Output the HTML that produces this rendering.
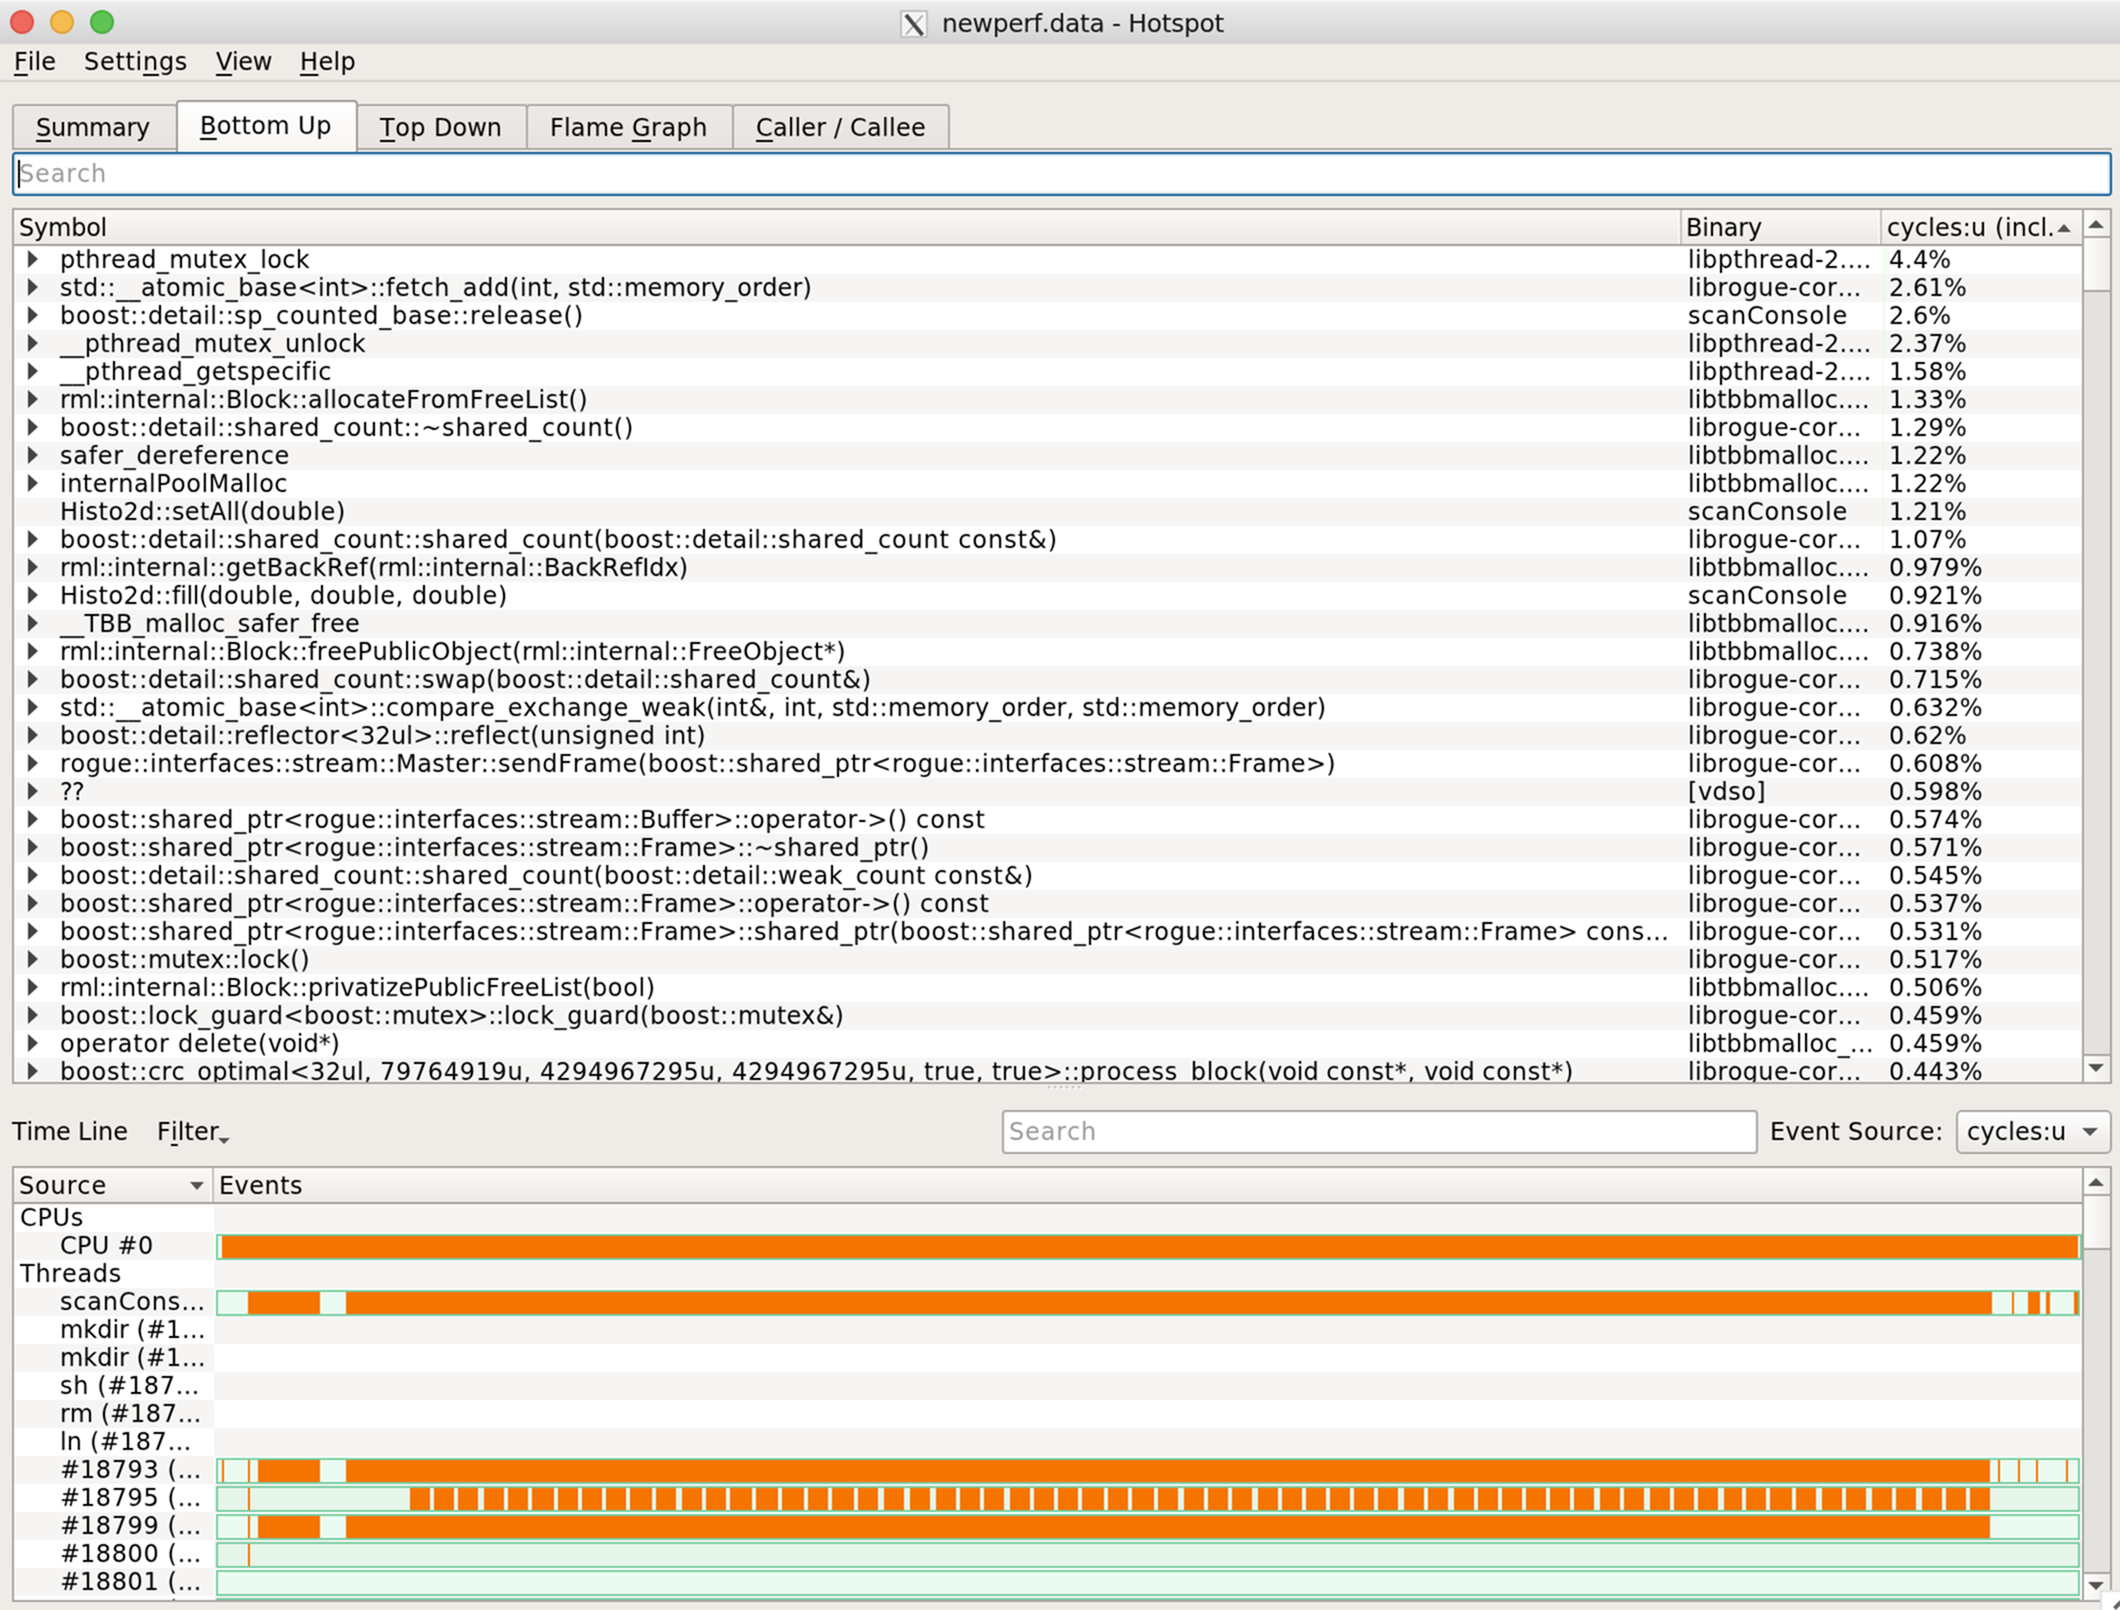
<!DOCTYPE html><html><head><meta charset="utf-8"><title>newperf.data - Hotspot</title><style>
*{box-sizing:border-box;margin:0;padding:0}
html{width:2120px;height:1610px;overflow:hidden;background:#efebe7}
body{position:relative;width:2120px;height:1610px;overflow:hidden;background:#efebe7}
#clip{position:absolute;left:0;top:0;width:2120px;height:1610px;overflow:hidden;overflow:clip}
#fx{position:absolute;left:-10px;top:-10px;width:2140px;height:1630px;overflow:hidden;background:#efebe7;filter:url(#bl)}
#root{position:absolute;left:10px;top:10px;width:2120px;height:1610px;font-family:"DejaVu Sans","Liberation Sans",sans-serif;font-size:24px;line-height:28px;color:#000;font-kerning:none;font-variant-ligatures:none;-webkit-font-smoothing:antialiased}
.a{position:absolute}
.t{position:absolute;white-space:nowrap;height:28px;line-height:28px;margin-top:1px}
u{text-decoration:underline;text-decoration-thickness:2px;text-underline-offset:4px;text-decoration-skip-ink:none}
#title{left:-10px;top:-10px;width:2140px;height:54px;background:linear-gradient(#ebebeb,#d3d3d3);border-top:12px solid #f4f4f4}
.tl{position:absolute;top:10px;width:24px;height:24px;border-radius:50%;border:2px solid}
#menuline{left:-10px;top:80px;width:2140px;height:2px;background:#d3cfcb}
.tab{position:absolute;top:104px;height:46px;border:2px solid #adaaa6;border-radius:4px 4px 0 0;background:linear-gradient(#ece9e6,#e6e3e0)}
.tab.sel{top:100px;height:52px;background:linear-gradient(#ffffff,#f8f5f2);border-color:#9f9b97;border-bottom:none;z-index:2}
#paneline{left:12px;top:148px;width:2100px;height:2px;background:#aeaaa4}
#search1{left:12px;top:152px;width:2100px;height:44px;border:2px solid #12609a;border-radius:4px;background:#fff;box-shadow:inset 0 0 0 2px #d3e0ea}
.frame{position:absolute;border:2px solid #a9a5a1;background:#fff;overflow:hidden}
.hdr{position:absolute;left:0;top:0;height:34px;background:linear-gradient(#fbf8f5,#ece9e6);}
.hline{position:absolute;left:0;height:2px;background:#a29e9a}
.vdiv{position:absolute;width:2px;background:#c6c3c0;box-shadow:-2px 0 0 #fbfaf8}
.row{position:absolute;left:0;height:28px}
.alt{background:#f7f5f3}
.arr{position:absolute;width:0;height:0;border-style:solid}
.sb{position:absolute;width:28px;background:#e4e2df;border-left:2px solid #a9a5a1}
.sbb{position:absolute;left:0;width:26px;background:linear-gradient(90deg,#fdfdfc,#eeece9)}
.sbl{position:absolute;left:0;width:26px;height:2px;background:#a9a5a1}
.ph{color:#9a9a9a}
.bar{position:absolute;height:26px;border:2px solid #7acea2}
.o{position:absolute;top:0;height:22px;background:#f67400}
</style></head><body><svg width="0" height="0" style="position:absolute"><filter id="bl" x="0" y="0" width="100%" height="100%" color-interpolation-filters="sRGB"><feConvolveMatrix order="5" kernelMatrix="0.00489 -0.01912 -0.04150 -0.01912 0.00489 -0.01912 0.07470 0.16215 0.07470 -0.01912 -0.04150 0.16215 0.35199 0.16215 -0.04150 -0.01912 0.07470 0.16215 0.07470 -0.01912 0.00489 -0.01912 -0.04150 -0.01912 0.00489" divisor="1" edgeMode="duplicate" preserveAlpha="true"/></filter></svg><div id="clip"><div id="fx"><div id="root">
<div id="title" class="a"></div>
<div class="tl" style="left:10px;background:#ee6a5e;border-color:#dc5148"></div>
<div class="tl" style="left:50px;background:#f5bd4f;border-color:#dfa337"></div>
<div class="tl" style="left:90px;background:#5fc454;border-color:#4aae40"></div>
<svg class="a" style="left:900px;top:10px" width="28" height="28" viewBox="0 0 28 28"><rect x="1" y="1" width="26" height="26" fill="#f4f4f4" stroke="#c2c2c2" stroke-width="2"/><line x1="22.5" y1="5.5" x2="6" y2="24.5" stroke="#a0a0a0" stroke-width="1.6"/><line x1="6" y1="5" x2="22.5" y2="25" stroke="#4a4a4a" stroke-width="4"/></svg>
<div class="t" id="wtitle" style="left:942px;top:9px;font-family:'DejaVu Sans','Liberation Sans',sans-serif;font-size:25px;color:#111;letter-spacing:-0.32px">newperf.data - Hotspot</div>
<div class="t menu" style="left:14px;top:47px"><span style="letter-spacing:0.02px"><u>F</u>ile</span></div>
<div class="t menu" style="left:84px;top:47px"><span style="letter-spacing:0.70px">Setti<u>n</u>gs</span></div>
<div class="t menu" style="left:216px;top:47px"><span style="letter-spacing:-0.37px"><u>V</u>iew</span></div>
<div class="t menu" style="left:300px;top:47px"><span style="letter-spacing:0.32px"><u>H</u>elp</span></div>
<div id="menuline" class="a"></div>
<div id="paneline" class="a"></div>
<div class="tab" style="left:12px;width:166px"></div>
<div class="t tabt" style="left:36px;top:113px;z-index:3"><span style="letter-spacing:-0.28px"><u>S</u>ummary</span></div>
<div class="tab sel" style="left:176px;width:182px"></div>
<div class="t tabt" style="left:200px;top:111px;z-index:3"><span style="letter-spacing:0.33px"><u>B</u>ottom </span><span style="letter-spacing:0.60px">Up</span></div>
<div class="tab" style="left:356px;width:172px"></div>
<div class="t tabt" style="left:380px;top:113px;z-index:3"><span style="letter-spacing:0.45px"><u>T</u>op </span><span style="letter-spacing:-0.00px">Down</span></div>
<div class="tab" style="left:526px;width:208px"></div>
<div class="t tabt" style="left:550px;top:113px;z-index:3"><span style="letter-spacing:0.17px">Flame </span><span style="letter-spacing:0.48px"><u>G</u>raph</span></div>
<div class="tab" style="left:732px;width:218px"></div>
<div class="t tabt" style="left:756px;top:113px;z-index:3"><span style="letter-spacing:0.14px"><u>C</u>aller / </span><span style="letter-spacing:0.28px">Callee</span></div>
<div id="search1" class="a"></div>
<div class="a" style="left:18px;top:160px;width:2px;height:28px;background:#000"></div>
<div class="t ph" style="left:19px;top:159px"><span style="letter-spacing:0.84px">Search</span></div>
<div class="frame" id="f1" style="left:12px;top:208px;width:2100px;height:876px">
<div class="hdr" style="width:2068px"></div>
<div class="hline" style="top:34px;width:2068px"></div>
<div class="vdiv" style="left:1666px;top:0;height:34px"></div>
<div class="vdiv" style="left:1866px;top:0;height:34px"></div>
<div class="t" style="left:5px;top:3px"><span style="letter-spacing:-0.23px">Symbol</span></div>
<div class="t" style="left:1672px;top:3px"><span style="letter-spacing:-0.19px">Binary</span></div>
<div class="t" style="left:1873px;top:3px"><span style="letter-spacing:0.20px">cycles:</span><span style="letter-spacing:0.60px">u (</span><span style="letter-spacing:0.13px">incl.</span></div>
<div class="arr" style="left:2043px;top:14px;border-width:0 7px 8px 7px;border-color:transparent transparent #555 transparent"></div>
<div class="row" style="top:36px;width:2068px"></div>
<div class="a" style="left:1868px;top:36px;width:8px;height:28px;background:#f3fbf3"></div>
<div class="arr" style="left:14px;top:40px;border-width:9px 0 9px 10px;border-color:transparent transparent transparent #444"></div>
<div class="t s" style="left:46px;top:35px"><span style="letter-spacing:0.34px">pthread_mutex_lock</span></div>
<div class="t b" style="left:1674px;top:35px"><span style="letter-spacing:0.39px">libpthread-</span><span style="letter-spacing:0.37px">2.…</span></div>
<div class="t p" style="left:1875px;top:35px"><span style="letter-spacing:0.55px">4.</span><span style="letter-spacing:-0.04px">4%</span></div>
<div class="row alt" style="top:64px;width:2068px"></div>
<div class="a" style="left:1868px;top:64px;width:4px;height:28px;background:#eef6ec"></div>
<div class="arr" style="left:14px;top:68px;border-width:9px 0 9px 10px;border-color:transparent transparent transparent #444"></div>
<div class="t s" style="left:46px;top:63px"><span style="letter-spacing:0.54px">std::</span><span style="letter-spacing:0.47px">__atomic_base&lt;</span><span style="letter-spacing:0.07px">int&gt;::</span><span style="letter-spacing:0.64px">fetch_add(</span><span style="letter-spacing:0.29px">int, </span><span style="letter-spacing:0.54px">std::</span><span style="letter-spacing:0.15px">memory_order)</span></div>
<div class="t b" style="left:1674px;top:63px"><span style="letter-spacing:0.33px">librogue-</span><span style="letter-spacing:0.56px">cor…</span></div>
<div class="t p" style="left:1875px;top:63px"><span style="letter-spacing:0.55px">2.</span><span style="letter-spacing:0.22px">61%</span></div>
<div class="row" style="top:92px;width:2068px"></div>
<div class="a" style="left:1868px;top:92px;width:4px;height:28px;background:#f3fbf3"></div>
<div class="arr" style="left:14px;top:96px;border-width:9px 0 9px 10px;border-color:transparent transparent transparent #444"></div>
<div class="t s" style="left:46px;top:91px"><span style="letter-spacing:0.76px">boost::</span><span style="letter-spacing:0.30px">detail::</span><span style="letter-spacing:0.77px">sp_counted_base::</span><span style="letter-spacing:0.80px">release()</span></div>
<div class="t b" style="left:1674px;top:91px"><span style="letter-spacing:0.83px">scanConsole</span></div>
<div class="t p" style="left:1875px;top:91px"><span style="letter-spacing:0.55px">2.</span><span style="letter-spacing:-0.04px">6%</span></div>
<div class="row alt" style="top:120px;width:2068px"></div>
<div class="a" style="left:1868px;top:120px;width:4px;height:28px;background:#eef6ec"></div>
<div class="arr" style="left:14px;top:124px;border-width:9px 0 9px 10px;border-color:transparent transparent transparent #444"></div>
<div class="t s" style="left:46px;top:119px"><span style="letter-spacing:0.35px">__pthread_mutex_unlock</span></div>
<div class="t b" style="left:1674px;top:119px"><span style="letter-spacing:0.39px">libpthread-</span><span style="letter-spacing:0.37px">2.…</span></div>
<div class="t p" style="left:1875px;top:119px"><span style="letter-spacing:0.55px">2.</span><span style="letter-spacing:0.22px">37%</span></div>
<div class="row" style="top:148px;width:2068px"></div>
<div class="a" style="left:1868px;top:148px;width:2px;height:28px;background:#f3fbf3"></div>
<div class="arr" style="left:14px;top:152px;border-width:9px 0 9px 10px;border-color:transparent transparent transparent #444"></div>
<div class="t s" style="left:46px;top:147px"><span style="letter-spacing:0.55px">__pthread_getspecific</span></div>
<div class="t b" style="left:1674px;top:147px"><span style="letter-spacing:0.39px">libpthread-</span><span style="letter-spacing:0.37px">2.…</span></div>
<div class="t p" style="left:1875px;top:147px"><span style="letter-spacing:0.55px">1.</span><span style="letter-spacing:0.22px">58%</span></div>
<div class="row alt" style="top:176px;width:2068px"></div>
<div class="a" style="left:1868px;top:176px;width:2px;height:28px;background:#eef6ec"></div>
<div class="arr" style="left:14px;top:180px;border-width:9px 0 9px 10px;border-color:transparent transparent transparent #444"></div>
<div class="t s" style="left:46px;top:175px"><span style="letter-spacing:-0.42px">rml::</span><span style="letter-spacing:0.33px">internal::</span><span style="letter-spacing:0.13px">Block::</span><span style="letter-spacing:0.44px">allocateFromFreeList()</span></div>
<div class="t b" style="left:1674px;top:175px"><span style="letter-spacing:0.19px">libtbbmalloc.…</span></div>
<div class="t p" style="left:1875px;top:175px"><span style="letter-spacing:0.55px">1.</span><span style="letter-spacing:0.22px">33%</span></div>
<div class="row" style="top:204px;width:2068px"></div>
<div class="a" style="left:1868px;top:204px;width:2px;height:28px;background:#f3fbf3"></div>
<div class="arr" style="left:14px;top:208px;border-width:9px 0 9px 10px;border-color:transparent transparent transparent #444"></div>
<div class="t s" style="left:46px;top:203px"><span style="letter-spacing:0.76px">boost::</span><span style="letter-spacing:0.30px">detail::</span><span style="letter-spacing:0.65px">shared_count::~</span><span style="letter-spacing:0.81px">shared_count()</span></div>
<div class="t b" style="left:1674px;top:203px"><span style="letter-spacing:0.33px">librogue-</span><span style="letter-spacing:0.56px">cor…</span></div>
<div class="t p" style="left:1875px;top:203px"><span style="letter-spacing:0.55px">1.</span><span style="letter-spacing:0.22px">29%</span></div>
<div class="row alt" style="top:232px;width:2068px"></div>
<div class="a" style="left:1868px;top:232px;width:2px;height:28px;background:#eef6ec"></div>
<div class="arr" style="left:14px;top:236px;border-width:9px 0 9px 10px;border-color:transparent transparent transparent #444"></div>
<div class="t s" style="left:46px;top:231px"><span style="letter-spacing:0.71px">safer_dereference</span></div>
<div class="t b" style="left:1674px;top:231px"><span style="letter-spacing:0.19px">libtbbmalloc.…</span></div>
<div class="t p" style="left:1875px;top:231px"><span style="letter-spacing:0.55px">1.</span><span style="letter-spacing:0.22px">22%</span></div>
<div class="row" style="top:260px;width:2068px"></div>
<div class="a" style="left:1868px;top:260px;width:2px;height:28px;background:#f3fbf3"></div>
<div class="arr" style="left:14px;top:264px;border-width:9px 0 9px 10px;border-color:transparent transparent transparent #444"></div>
<div class="t s" style="left:46px;top:259px"><span style="letter-spacing:0.46px">internalPoolMalloc</span></div>
<div class="t b" style="left:1674px;top:259px"><span style="letter-spacing:0.19px">libtbbmalloc.…</span></div>
<div class="t p" style="left:1875px;top:259px"><span style="letter-spacing:0.55px">1.</span><span style="letter-spacing:0.22px">22%</span></div>
<div class="row alt" style="top:288px;width:2068px"></div>
<div class="a" style="left:1868px;top:288px;width:2px;height:28px;background:#eef6ec"></div>
<div class="t s" style="left:46px;top:287px"><span style="letter-spacing:0.45px">Histo2d::</span><span style="letter-spacing:0.31px">setAll(</span><span style="letter-spacing:0.69px">double)</span></div>
<div class="t b" style="left:1674px;top:287px"><span style="letter-spacing:0.83px">scanConsole</span></div>
<div class="t p" style="left:1875px;top:287px"><span style="letter-spacing:0.55px">1.</span><span style="letter-spacing:0.22px">21%</span></div>
<div class="row" style="top:316px;width:2068px"></div>
<div class="a" style="left:1868px;top:316px;width:2px;height:28px;background:#f3fbf3"></div>
<div class="arr" style="left:14px;top:320px;border-width:9px 0 9px 10px;border-color:transparent transparent transparent #444"></div>
<div class="t s" style="left:46px;top:315px"><span style="letter-spacing:0.76px">boost::</span><span style="letter-spacing:0.30px">detail::</span><span style="letter-spacing:0.70px">shared_count::</span><span style="letter-spacing:0.82px">shared_count(</span><span style="letter-spacing:0.76px">boost::</span><span style="letter-spacing:0.30px">detail::</span><span style="letter-spacing:0.80px">shared_count </span><span style="letter-spacing:0.99px">const&amp;)</span></div>
<div class="t b" style="left:1674px;top:315px"><span style="letter-spacing:0.33px">librogue-</span><span style="letter-spacing:0.56px">cor…</span></div>
<div class="t p" style="left:1875px;top:315px"><span style="letter-spacing:0.55px">1.</span><span style="letter-spacing:0.22px">07%</span></div>
<div class="row alt" style="top:344px;width:2068px"></div>
<div class="arr" style="left:14px;top:348px;border-width:9px 0 9px 10px;border-color:transparent transparent transparent #444"></div>
<div class="t s" style="left:46px;top:343px"><span style="letter-spacing:-0.42px">rml::</span><span style="letter-spacing:0.33px">internal::</span><span style="letter-spacing:0.46px">getBackRef(</span><span style="letter-spacing:-0.42px">rml::</span><span style="letter-spacing:0.33px">internal::</span><span style="letter-spacing:-0.00px">BackRefIdx)</span></div>
<div class="t b" style="left:1674px;top:343px"><span style="letter-spacing:0.19px">libtbbmalloc.…</span></div>
<div class="t p" style="left:1875px;top:343px"><span style="letter-spacing:0.55px">0.</span><span style="letter-spacing:0.35px">979%</span></div>
<div class="row" style="top:372px;width:2068px"></div>
<div class="arr" style="left:14px;top:376px;border-width:9px 0 9px 10px;border-color:transparent transparent transparent #444"></div>
<div class="t s" style="left:46px;top:371px"><span style="letter-spacing:0.45px">Histo2d::</span><span style="letter-spacing:-0.36px">fill(</span><span style="letter-spacing:0.62px">double, </span><span style="letter-spacing:0.62px">double, </span><span style="letter-spacing:0.69px">double)</span></div>
<div class="t b" style="left:1674px;top:371px"><span style="letter-spacing:0.83px">scanConsole</span></div>
<div class="t p" style="left:1875px;top:371px"><span style="letter-spacing:0.55px">0.</span><span style="letter-spacing:0.35px">921%</span></div>
<div class="row alt" style="top:400px;width:2068px"></div>
<div class="arr" style="left:14px;top:404px;border-width:9px 0 9px 10px;border-color:transparent transparent transparent #444"></div>
<div class="t s" style="left:46px;top:399px"><span style="letter-spacing:0.22px">__TBB_malloc_safer_free</span></div>
<div class="t b" style="left:1674px;top:399px"><span style="letter-spacing:0.19px">libtbbmalloc.…</span></div>
<div class="t p" style="left:1875px;top:399px"><span style="letter-spacing:0.55px">0.</span><span style="letter-spacing:0.35px">916%</span></div>
<div class="row" style="top:428px;width:2068px"></div>
<div class="arr" style="left:14px;top:432px;border-width:9px 0 9px 10px;border-color:transparent transparent transparent #444"></div>
<div class="t s" style="left:46px;top:427px"><span style="letter-spacing:-0.42px">rml::</span><span style="letter-spacing:0.33px">internal::</span><span style="letter-spacing:0.13px">Block::</span><span style="letter-spacing:0.42px">freePublicObject(</span><span style="letter-spacing:-0.42px">rml::</span><span style="letter-spacing:0.33px">internal::</span><span style="letter-spacing:0.44px">FreeObject*)</span></div>
<div class="t b" style="left:1674px;top:427px"><span style="letter-spacing:0.19px">libtbbmalloc.…</span></div>
<div class="t p" style="left:1875px;top:427px"><span style="letter-spacing:0.55px">0.</span><span style="letter-spacing:0.35px">738%</span></div>
<div class="row alt" style="top:456px;width:2068px"></div>
<div class="arr" style="left:14px;top:460px;border-width:9px 0 9px 10px;border-color:transparent transparent transparent #444"></div>
<div class="t s" style="left:46px;top:455px"><span style="letter-spacing:0.76px">boost::</span><span style="letter-spacing:0.30px">detail::</span><span style="letter-spacing:0.70px">shared_count::</span><span style="letter-spacing:0.51px">swap(</span><span style="letter-spacing:0.76px">boost::</span><span style="letter-spacing:0.30px">detail::</span><span style="letter-spacing:0.85px">shared_count&amp;)</span></div>
<div class="t b" style="left:1674px;top:455px"><span style="letter-spacing:0.33px">librogue-</span><span style="letter-spacing:0.56px">cor…</span></div>
<div class="t p" style="left:1875px;top:455px"><span style="letter-spacing:0.55px">0.</span><span style="letter-spacing:0.35px">715%</span></div>
<div class="row" style="top:484px;width:2068px"></div>
<div class="arr" style="left:14px;top:488px;border-width:9px 0 9px 10px;border-color:transparent transparent transparent #444"></div>
<div class="t s" style="left:46px;top:483px"><span style="letter-spacing:0.54px">std::</span><span style="letter-spacing:0.47px">__atomic_base&lt;</span><span style="letter-spacing:0.07px">int&gt;::</span><span style="letter-spacing:0.48px">compare_exchange_weak(</span><span style="letter-spacing:0.46px">int&amp;, </span><span style="letter-spacing:0.29px">int, </span><span style="letter-spacing:0.54px">std::</span><span style="letter-spacing:0.15px">memory_order, </span><span style="letter-spacing:0.54px">std::</span><span style="letter-spacing:0.15px">memory_order)</span></div>
<div class="t b" style="left:1674px;top:483px"><span style="letter-spacing:0.33px">librogue-</span><span style="letter-spacing:0.56px">cor…</span></div>
<div class="t p" style="left:1875px;top:483px"><span style="letter-spacing:0.55px">0.</span><span style="letter-spacing:0.35px">632%</span></div>
<div class="row alt" style="top:512px;width:2068px"></div>
<div class="arr" style="left:14px;top:516px;border-width:9px 0 9px 10px;border-color:transparent transparent transparent #444"></div>
<div class="t s" style="left:46px;top:511px"><span style="letter-spacing:0.76px">boost::</span><span style="letter-spacing:0.30px">detail::</span><span style="letter-spacing:0.42px">reflector&lt;</span><span style="letter-spacing:0.19px">32ul&gt;::</span><span style="letter-spacing:0.44px">reflect(</span><span style="letter-spacing:0.70px">unsigned </span><span style="letter-spacing:0.34px">int)</span></div>
<div class="t b" style="left:1674px;top:511px"><span style="letter-spacing:0.33px">librogue-</span><span style="letter-spacing:0.56px">cor…</span></div>
<div class="t p" style="left:1875px;top:511px"><span style="letter-spacing:0.55px">0.</span><span style="letter-spacing:0.22px">62%</span></div>
<div class="row" style="top:540px;width:2068px"></div>
<div class="arr" style="left:14px;top:544px;border-width:9px 0 9px 10px;border-color:transparent transparent transparent #444"></div>
<div class="t s" style="left:46px;top:539px"><span style="letter-spacing:0.58px">rogue::</span><span style="letter-spacing:0.52px">interfaces::</span><span style="letter-spacing:0.40px">stream::</span><span style="letter-spacing:0.48px">Master::</span><span style="letter-spacing:0.64px">sendFrame(</span><span style="letter-spacing:0.76px">boost::</span><span style="letter-spacing:0.64px">shared_ptr&lt;</span><span style="letter-spacing:0.58px">rogue::</span><span style="letter-spacing:0.52px">interfaces::</span><span style="letter-spacing:0.40px">stream::</span><span style="letter-spacing:0.29px">Frame&gt;)</span></div>
<div class="t b" style="left:1674px;top:539px"><span style="letter-spacing:0.33px">librogue-</span><span style="letter-spacing:0.56px">cor…</span></div>
<div class="t p" style="left:1875px;top:539px"><span style="letter-spacing:0.55px">0.</span><span style="letter-spacing:0.35px">608%</span></div>
<div class="row alt" style="top:568px;width:2068px"></div>
<div class="arr" style="left:14px;top:572px;border-width:9px 0 9px 10px;border-color:transparent transparent transparent #444"></div>
<div class="t s" style="left:46px;top:567px"><span style="letter-spacing:-0.74px">??</span></div>
<div class="t b" style="left:1674px;top:567px"><span style="letter-spacing:0.64px">[</span><span style="letter-spacing:0.40px">vdso]</span></div>
<div class="t p" style="left:1875px;top:567px"><span style="letter-spacing:0.55px">0.</span><span style="letter-spacing:0.35px">598%</span></div>
<div class="row" style="top:596px;width:2068px"></div>
<div class="arr" style="left:14px;top:600px;border-width:9px 0 9px 10px;border-color:transparent transparent transparent #444"></div>
<div class="t s" style="left:46px;top:595px"><span style="letter-spacing:0.76px">boost::</span><span style="letter-spacing:0.64px">shared_ptr&lt;</span><span style="letter-spacing:0.58px">rogue::</span><span style="letter-spacing:0.52px">interfaces::</span><span style="letter-spacing:0.40px">stream::</span><span style="letter-spacing:0.06px">Buffer&gt;::</span><span style="letter-spacing:0.59px">operator-&gt;() </span><span style="letter-spacing:1.00px">const</span></div>
<div class="t b" style="left:1674px;top:595px"><span style="letter-spacing:0.33px">librogue-</span><span style="letter-spacing:0.56px">cor…</span></div>
<div class="t p" style="left:1875px;top:595px"><span style="letter-spacing:0.55px">0.</span><span style="letter-spacing:0.35px">574%</span></div>
<div class="row alt" style="top:624px;width:2068px"></div>
<div class="arr" style="left:14px;top:628px;border-width:9px 0 9px 10px;border-color:transparent transparent transparent #444"></div>
<div class="t s" style="left:46px;top:623px"><span style="letter-spacing:0.76px">boost::</span><span style="letter-spacing:0.64px">shared_ptr&lt;</span><span style="letter-spacing:0.58px">rogue::</span><span style="letter-spacing:0.52px">interfaces::</span><span style="letter-spacing:0.40px">stream::</span><span style="letter-spacing:0.12px">Frame&gt;::~</span><span style="letter-spacing:0.71px">shared_ptr()</span></div>
<div class="t b" style="left:1674px;top:623px"><span style="letter-spacing:0.33px">librogue-</span><span style="letter-spacing:0.56px">cor…</span></div>
<div class="t p" style="left:1875px;top:623px"><span style="letter-spacing:0.55px">0.</span><span style="letter-spacing:0.35px">571%</span></div>
<div class="row" style="top:652px;width:2068px"></div>
<div class="arr" style="left:14px;top:656px;border-width:9px 0 9px 10px;border-color:transparent transparent transparent #444"></div>
<div class="t s" style="left:46px;top:651px"><span style="letter-spacing:0.76px">boost::</span><span style="letter-spacing:0.30px">detail::</span><span style="letter-spacing:0.70px">shared_count::</span><span style="letter-spacing:0.82px">shared_count(</span><span style="letter-spacing:0.76px">boost::</span><span style="letter-spacing:0.30px">detail::</span><span style="letter-spacing:0.51px">weak_count </span><span style="letter-spacing:0.99px">const&amp;)</span></div>
<div class="t b" style="left:1674px;top:651px"><span style="letter-spacing:0.33px">librogue-</span><span style="letter-spacing:0.56px">cor…</span></div>
<div class="t p" style="left:1875px;top:651px"><span style="letter-spacing:0.55px">0.</span><span style="letter-spacing:0.35px">545%</span></div>
<div class="row alt" style="top:680px;width:2068px"></div>
<div class="arr" style="left:14px;top:684px;border-width:9px 0 9px 10px;border-color:transparent transparent transparent #444"></div>
<div class="t s" style="left:46px;top:679px"><span style="letter-spacing:0.76px">boost::</span><span style="letter-spacing:0.64px">shared_ptr&lt;</span><span style="letter-spacing:0.58px">rogue::</span><span style="letter-spacing:0.52px">interfaces::</span><span style="letter-spacing:0.40px">stream::</span><span style="letter-spacing:0.15px">Frame&gt;::</span><span style="letter-spacing:0.59px">operator-&gt;() </span><span style="letter-spacing:1.00px">const</span></div>
<div class="t b" style="left:1674px;top:679px"><span style="letter-spacing:0.33px">librogue-</span><span style="letter-spacing:0.56px">cor…</span></div>
<div class="t p" style="left:1875px;top:679px"><span style="letter-spacing:0.55px">0.</span><span style="letter-spacing:0.35px">537%</span></div>
<div class="row" style="top:708px;width:2068px"></div>
<div class="arr" style="left:14px;top:712px;border-width:9px 0 9px 10px;border-color:transparent transparent transparent #444"></div>
<div class="t s" style="left:46px;top:707px"><span style="letter-spacing:0.76px">boost::</span><span style="letter-spacing:0.64px">shared_ptr&lt;</span><span style="letter-spacing:0.58px">rogue::</span><span style="letter-spacing:0.52px">interfaces::</span><span style="letter-spacing:0.40px">stream::</span><span style="letter-spacing:0.15px">Frame&gt;::</span><span style="letter-spacing:0.71px">shared_ptr(</span><span style="letter-spacing:0.76px">boost::</span><span style="letter-spacing:0.64px">shared_ptr&lt;</span><span style="letter-spacing:0.58px">rogue::</span><span style="letter-spacing:0.52px">interfaces::</span><span style="letter-spacing:0.40px">stream::</span><span style="letter-spacing:0.25px">Frame&gt; </span><span style="letter-spacing:0.88px">cons…</span></div>
<div class="t b" style="left:1674px;top:707px"><span style="letter-spacing:0.33px">librogue-</span><span style="letter-spacing:0.56px">cor…</span></div>
<div class="t p" style="left:1875px;top:707px"><span style="letter-spacing:0.55px">0.</span><span style="letter-spacing:0.35px">531%</span></div>
<div class="row alt" style="top:736px;width:2068px"></div>
<div class="arr" style="left:14px;top:740px;border-width:9px 0 9px 10px;border-color:transparent transparent transparent #444"></div>
<div class="t s" style="left:46px;top:735px"><span style="letter-spacing:0.76px">boost::</span><span style="letter-spacing:-0.16px">mutex::</span><span style="letter-spacing:0.47px">lock()</span></div>
<div class="t b" style="left:1674px;top:735px"><span style="letter-spacing:0.33px">librogue-</span><span style="letter-spacing:0.56px">cor…</span></div>
<div class="t p" style="left:1875px;top:735px"><span style="letter-spacing:0.55px">0.</span><span style="letter-spacing:0.35px">517%</span></div>
<div class="row" style="top:764px;width:2068px"></div>
<div class="arr" style="left:14px;top:768px;border-width:9px 0 9px 10px;border-color:transparent transparent transparent #444"></div>
<div class="t s" style="left:46px;top:763px"><span style="letter-spacing:-0.42px">rml::</span><span style="letter-spacing:0.33px">internal::</span><span style="letter-spacing:0.13px">Block::</span><span style="letter-spacing:0.16px">privatizePublicFreeList(</span><span style="letter-spacing:0.67px">bool)</span></div>
<div class="t b" style="left:1674px;top:763px"><span style="letter-spacing:0.19px">libtbbmalloc.…</span></div>
<div class="t p" style="left:1875px;top:763px"><span style="letter-spacing:0.55px">0.</span><span style="letter-spacing:0.35px">506%</span></div>
<div class="row alt" style="top:792px;width:2068px"></div>
<div class="arr" style="left:14px;top:796px;border-width:9px 0 9px 10px;border-color:transparent transparent transparent #444"></div>
<div class="t s" style="left:46px;top:791px"><span style="letter-spacing:0.76px">boost::</span><span style="letter-spacing:0.47px">lock_guard&lt;</span><span style="letter-spacing:0.76px">boost::</span><span style="letter-spacing:-0.16px">mutex&gt;::</span><span style="letter-spacing:0.54px">lock_guard(</span><span style="letter-spacing:0.76px">boost::</span><span style="letter-spacing:0.14px">mutex&amp;)</span></div>
<div class="t b" style="left:1674px;top:791px"><span style="letter-spacing:0.33px">librogue-</span><span style="letter-spacing:0.56px">cor…</span></div>
<div class="t p" style="left:1875px;top:791px"><span style="letter-spacing:0.55px">0.</span><span style="letter-spacing:0.35px">459%</span></div>
<div class="row" style="top:820px;width:2068px"></div>
<div class="arr" style="left:14px;top:824px;border-width:9px 0 9px 10px;border-color:transparent transparent transparent #444"></div>
<div class="t s" style="left:46px;top:819px"><span style="letter-spacing:0.79px">operator </span><span style="letter-spacing:0.72px">delete(</span><span style="letter-spacing:-0.03px">void*)</span></div>
<div class="t b" style="left:1674px;top:819px"><span style="letter-spacing:0.16px">libtbbmalloc_…</span></div>
<div class="t p" style="left:1875px;top:819px"><span style="letter-spacing:0.55px">0.</span><span style="letter-spacing:0.35px">459%</span></div>
<div class="row alt" style="top:848px;width:2068px"></div>
<div class="arr" style="left:14px;top:852px;border-width:9px 0 9px 10px;border-color:transparent transparent transparent #444"></div>
<div class="t s" style="left:46px;top:847px"><span style="letter-spacing:0.76px">boost::</span><span style="letter-spacing:0.24px">crc_optimal&lt;</span><span style="letter-spacing:0.39px">32ul, </span><span style="letter-spacing:0.67px">79764919u, </span><span style="letter-spacing:0.68px">4294967295u, </span><span style="letter-spacing:0.68px">4294967295u, </span><span style="letter-spacing:0.58px">true, </span><span style="letter-spacing:0.35px">true&gt;::</span><span style="letter-spacing:0.73px">process_block(</span><span style="letter-spacing:-0.08px">void </span><span style="letter-spacing:0.72px">const*, </span><span style="letter-spacing:-0.08px">void </span><span style="letter-spacing:0.80px">const*)</span></div>
<div class="t b" style="left:1674px;top:847px"><span style="letter-spacing:0.33px">librogue-</span><span style="letter-spacing:0.56px">cor…</span></div>
<div class="t p" style="left:1875px;top:847px"><span style="letter-spacing:0.55px">0.</span><span style="letter-spacing:0.35px">443%</span></div>
<div class="sb" style="left:2068px;top:0;height:872px">
<div class="sbb" style="top:0;height:26px"></div><div class="sbl" style="top:26px"></div>
<div class="sbb" style="top:28px;height:52px"></div><div class="sbl" style="top:80px"></div>
<div class="sbl" style="top:844px"></div><div class="sbb" style="top:846px;height:26px"></div>
<div class="arr" style="left:4px;top:10px;border-width:0 8px 8px 8px;border-color:transparent transparent #555 transparent"></div>
<div class="arr" style="left:4px;top:854px;border-width:8px 8px 0 8px;border-color:#555 transparent transparent transparent"></div>
</div>
</div>
<div class="a" style="left:1048px;top:1086px;width:32px;height:2px;background:repeating-linear-gradient(90deg,#c4c0bc 0 2px,transparent 2px 6px)"></div>
<div class="a" style="left:1050px;top:1088px;width:32px;height:2px;background:repeating-linear-gradient(90deg,#fbfaf9 0 2px,transparent 2px 6px)"></div>
<div class="t" style="left:12px;top:1117px"><span style="letter-spacing:-0.22px">Time </span><span style="letter-spacing:-0.00px">Line</span></div>
<div class="t" style="left:157px;top:1117px"><span style="letter-spacing:0.14px">F<u>i</u>lter</span></div>
<div class="arr" style="left:218px;top:1138px;border-width:6px 6px 0 6px;border-color:#555 transparent transparent transparent"></div>
<div class="a" style="left:1002px;top:1110px;width:756px;height:44px;border:2px solid #aaa6a2;border-radius:4px;background:#fff"></div>
<div class="t ph" style="left:1009px;top:1117px"><span style="letter-spacing:0.84px">Search</span></div>
<div class="t" style="left:1770px;top:1117px"><span style="letter-spacing:0.27px">Event </span><span style="letter-spacing:0.71px">Source:</span></div>
<div class="a" style="left:1956px;top:1110px;width:156px;height:44px;border:2px solid #aaa6a2;border-radius:6px;background:linear-gradient(#ffffff,#ebe8e5)"></div>
<div class="t" style="left:1967px;top:1117px"><span style="letter-spacing:0.20px">cycles:</span><span style="letter-spacing:0.79px">u</span></div>
<div class="arr" style="left:2082px;top:1128px;border-width:8px 8px 0 8px;border-color:#555 transparent transparent transparent"></div>
<div class="frame" id="f2" style="left:12px;top:1166px;width:2100px;height:436px">
<div class="hdr" style="width:2068px"></div>
<div class="hline" style="top:34px;width:2068px"></div>
<div class="vdiv" style="left:198px;top:0;height:34px"></div>
<div class="t" style="left:5px;top:3px"><span style="letter-spacing:0.84px">Source</span></div>
<div class="arr" style="left:176px;top:14px;border-width:8px 7px 0 7px;border-color:#555 transparent transparent transparent"></div>
<div class="t" style="left:205px;top:3px"><span style="letter-spacing:0.46px">Events</span></div>
<div class="row" style="top:36px;left:0;width:200px;background:#fff"></div>
<div class="row" style="top:36px;left:200px;width:1868px;background:#f7f5f3"></div>
<div class="t" style="left:6px;top:35px"><span style="letter-spacing:0.67px">CPUs</span></div>
<div class="row" style="top:64px;left:0;width:200px;background:#f7f5f3"></div>
<div class="row" style="top:64px;left:200px;width:1868px;background:#fff"></div>
<div class="t" style="left:46px;top:63px"><span style="letter-spacing:0.29px">CPU #</span><span style="letter-spacing:0.73px">0</span></div>
<div class="bar" style="left:202px;top:66px;width:1866px;background:#ebfbf2">
<div class="o" style="left:4px;width:1856px"></div>
</div>
<div class="row" style="top:92px;left:0;width:200px;background:#fff"></div>
<div class="row" style="top:92px;left:200px;width:1868px;background:#f7f5f3"></div>
<div class="t" style="left:6px;top:91px"><span style="letter-spacing:0.72px">Threads</span></div>
<div class="row" style="top:120px;left:0;width:200px;background:#f7f5f3"></div>
<div class="row" style="top:120px;left:200px;width:1868px;background:#fff"></div>
<div class="t" style="left:46px;top:119px"><span style="letter-spacing:0.80px">scanCons…</span></div>
<div class="bar" style="left:202px;top:122px;width:1864px;background:#ebfbf2">
<div class="o" style="left:30px;width:72px"></div>
<div class="o" style="left:128px;width:1646px"></div>
<div class="o" style="left:1794px;width:2px"></div>
<div class="o" style="left:1810px;width:12px"></div>
<div class="o" style="left:1828px;width:4px"></div>
<div class="o" style="left:1856px;width:4px"></div>
</div>
<div class="row" style="top:148px;left:0;width:200px;background:#fff"></div>
<div class="row" style="top:148px;left:200px;width:1868px;background:#f7f5f3"></div>
<div class="t" style="left:46px;top:147px"><span style="letter-spacing:-0.02px">mkdir (#</span><span style="letter-spacing:0.37px">1…</span></div>
<div class="row" style="top:176px;left:0;width:200px;background:#f7f5f3"></div>
<div class="row" style="top:176px;left:200px;width:1868px;background:#fff"></div>
<div class="t" style="left:46px;top:175px"><span style="letter-spacing:-0.02px">mkdir (#</span><span style="letter-spacing:0.37px">1…</span></div>
<div class="row" style="top:204px;left:0;width:200px;background:#fff"></div>
<div class="row" style="top:204px;left:200px;width:1868px;background:#f7f5f3"></div>
<div class="t" style="left:46px;top:203px"><span style="letter-spacing:0.64px">sh (#</span><span style="letter-spacing:0.55px">187…</span></div>
<div class="row" style="top:232px;left:0;width:200px;background:#f7f5f3"></div>
<div class="row" style="top:232px;left:200px;width:1868px;background:#fff"></div>
<div class="t" style="left:46px;top:231px"><span style="letter-spacing:-0.07px">rm (#</span><span style="letter-spacing:0.55px">187…</span></div>
<div class="row" style="top:260px;left:0;width:200px;background:#fff"></div>
<div class="row" style="top:260px;left:200px;width:1868px;background:#f7f5f3"></div>
<div class="t" style="left:46px;top:259px"><span style="letter-spacing:0.20px">ln (#</span><span style="letter-spacing:0.55px">187…</span></div>
<div class="row" style="top:288px;left:0;width:200px;background:#f7f5f3"></div>
<div class="row" style="top:288px;left:200px;width:1868px;background:#fff"></div>
<div class="t" style="left:46px;top:287px"><span style="letter-spacing:-0.11px">#</span><span style="letter-spacing:0.58px">18793 (…</span></div>
<div class="bar" style="left:202px;top:290px;width:1864px;background:#ebfbf2">
<div class="o" style="left:4px;width:2px"></div>
<div class="o" style="left:30px;width:2px"></div>
<div class="o" style="left:40px;width:62px"></div>
<div class="o" style="left:128px;width:1644px"></div>
<div class="o" style="left:1780px;width:2px"></div>
<div class="o" style="left:1800px;width:2px"></div>
<div class="o" style="left:1818px;width:2px"></div>
<div class="o" style="left:1848px;width:2px"></div>
</div>
<div class="row" style="top:316px;left:0;width:200px;background:#fff"></div>
<div class="row" style="top:316px;left:200px;width:1868px;background:#f7f5f3"></div>
<div class="t" style="left:46px;top:315px"><span style="letter-spacing:-0.11px">#</span><span style="letter-spacing:0.58px">18795 (…</span></div>
<div class="bar" style="left:202px;top:318px;width:1864px;background:#e6f5ea">
<div class="o" style="left:30px;width:2px"></div>
<div class="o" style="left:192px;width:20px"></div>
<div class="o" style="left:216px;width:20px"></div>
<div class="o" style="left:240px;width:20px"></div>
<div class="o" style="left:266px;width:20px"></div>
<div class="o" style="left:290px;width:20px"></div>
<div class="o" style="left:314px;width:22px"></div>
<div class="o" style="left:340px;width:20px"></div>
<div class="o" style="left:364px;width:20px"></div>
<div class="o" style="left:388px;width:20px"></div>
<div class="o" style="left:412px;width:22px"></div>
<div class="o" style="left:438px;width:20px"></div>
<div class="o" style="left:464px;width:20px"></div>
<div class="o" style="left:488px;width:20px"></div>
<div class="o" style="left:512px;width:22px"></div>
<div class="o" style="left:538px;width:22px"></div>
<div class="o" style="left:564px;width:22px"></div>
<div class="o" style="left:590px;width:20px"></div>
<div class="o" style="left:614px;width:22px"></div>
<div class="o" style="left:640px;width:20px"></div>
<div class="o" style="left:666px;width:20px"></div>
<div class="o" style="left:692px;width:20px"></div>
<div class="o" style="left:718px;width:20px"></div>
<div class="o" style="left:742px;width:20px"></div>
<div class="o" style="left:766px;width:20px"></div>
<div class="o" style="left:792px;width:20px"></div>
<div class="o" style="left:816px;width:20px"></div>
<div class="o" style="left:840px;width:20px"></div>
<div class="o" style="left:864px;width:22px"></div>
<div class="o" style="left:890px;width:20px"></div>
<div class="o" style="left:914px;width:22px"></div>
<div class="o" style="left:940px;width:20px"></div>
<div class="o" style="left:966px;width:20px"></div>
<div class="o" style="left:990px;width:20px"></div>
<div class="o" style="left:1014px;width:20px"></div>
<div class="o" style="left:1040px;width:20px"></div>
<div class="o" style="left:1064px;width:20px"></div>
<div class="o" style="left:1088px;width:20px"></div>
<div class="o" style="left:1112px;width:20px"></div>
<div class="o" style="left:1136px;width:20px"></div>
<div class="o" style="left:1160px;width:20px"></div>
<div class="o" style="left:1186px;width:20px"></div>
<div class="o" style="left:1210px;width:20px"></div>
<div class="o" style="left:1236px;width:20px"></div>
<div class="o" style="left:1260px;width:20px"></div>
<div class="o" style="left:1284px;width:20px"></div>
<div class="o" style="left:1308px;width:20px"></div>
<div class="o" style="left:1332px;width:20px"></div>
<div class="o" style="left:1356px;width:20px"></div>
<div class="o" style="left:1382px;width:20px"></div>
<div class="o" style="left:1406px;width:20px"></div>
<div class="o" style="left:1432px;width:20px"></div>
<div class="o" style="left:1456px;width:20px"></div>
<div class="o" style="left:1480px;width:20px"></div>
<div class="o" style="left:1506px;width:18px"></div>
<div class="o" style="left:1528px;width:20px"></div>
<div class="o" style="left:1552px;width:22px"></div>
<div class="o" style="left:1578px;width:20px"></div>
<div class="o" style="left:1604px;width:20px"></div>
<div class="o" style="left:1628px;width:20px"></div>
<div class="o" style="left:1654px;width:20px"></div>
<div class="o" style="left:1678px;width:20px"></div>
<div class="o" style="left:1704px;width:20px"></div>
<div class="o" style="left:1728px;width:20px"></div>
<div class="o" style="left:1752px;width:20px"></div>
</div>
<div class="row" style="top:344px;left:0;width:200px;background:#f7f5f3"></div>
<div class="row" style="top:344px;left:200px;width:1868px;background:#fff"></div>
<div class="t" style="left:46px;top:343px"><span style="letter-spacing:-0.11px">#</span><span style="letter-spacing:0.58px">18799 (…</span></div>
<div class="bar" style="left:202px;top:346px;width:1864px;background:#ebfbf2">
<div class="o" style="left:30px;width:2px"></div>
<div class="o" style="left:40px;width:62px"></div>
<div class="o" style="left:128px;width:1644px"></div>
</div>
<div class="row" style="top:372px;left:0;width:200px;background:#fff"></div>
<div class="row" style="top:372px;left:200px;width:1868px;background:#f7f5f3"></div>
<div class="t" style="left:46px;top:371px"><span style="letter-spacing:-0.11px">#</span><span style="letter-spacing:0.58px">18800 (…</span></div>
<div class="bar" style="left:202px;top:374px;width:1864px;background:#e6f5ea">
<div class="o" style="left:30px;width:2px"></div>
</div>
<div class="row" style="top:400px;left:0;width:200px;background:#f7f5f3"></div>
<div class="row" style="top:400px;left:200px;width:1868px;background:#fff"></div>
<div class="t" style="left:46px;top:399px"><span style="letter-spacing:-0.11px">#</span><span style="letter-spacing:0.58px">18801 (…</span></div>
<div class="bar" style="left:202px;top:402px;width:1864px;background:#ebfbf2">
</div>
<div class="row" style="top:428px;left:0;width:200px;background:#fff"></div>
<div class="row" style="top:428px;left:200px;width:1868px;background:#f7f5f3"></div>
<div class="t" style="left:46px;top:427px"><span style="letter-spacing:-0.11px">#</span><span style="letter-spacing:0.58px">18802 (…</span></div>
<div class="bar" style="left:202px;top:430px;width:1864px;background:#e6f5ea">
</div>
<div class="sb" style="left:2068px;top:0;height:432px">
<div class="sbb" style="top:0;height:26px"></div><div class="sbl" style="top:26px"></div>
<div class="sbb" style="top:28px;height:52px"></div><div class="sbl" style="top:80px"></div>
<div class="sbl" style="top:404px"></div><div class="sbb" style="top:406px;height:26px"></div>
<div class="arr" style="left:4px;top:10px;border-width:0 8px 8px 8px;border-color:transparent transparent #555 transparent"></div>
<div class="arr" style="left:4px;top:414px;border-width:8px 8px 0 8px;border-color:#555 transparent transparent transparent"></div>
</div>
</div>
<div class="a" style="left:2100px;top:1590px;width:24px;height:24px;background:#fff;border:2px solid #e2e2e2"></div>
<div class="a" style="left:2113px;top:1603px;width:10px;height:4px;background:#666;transform:rotate(-45deg)"></div>
</div></div></div></body></html>
